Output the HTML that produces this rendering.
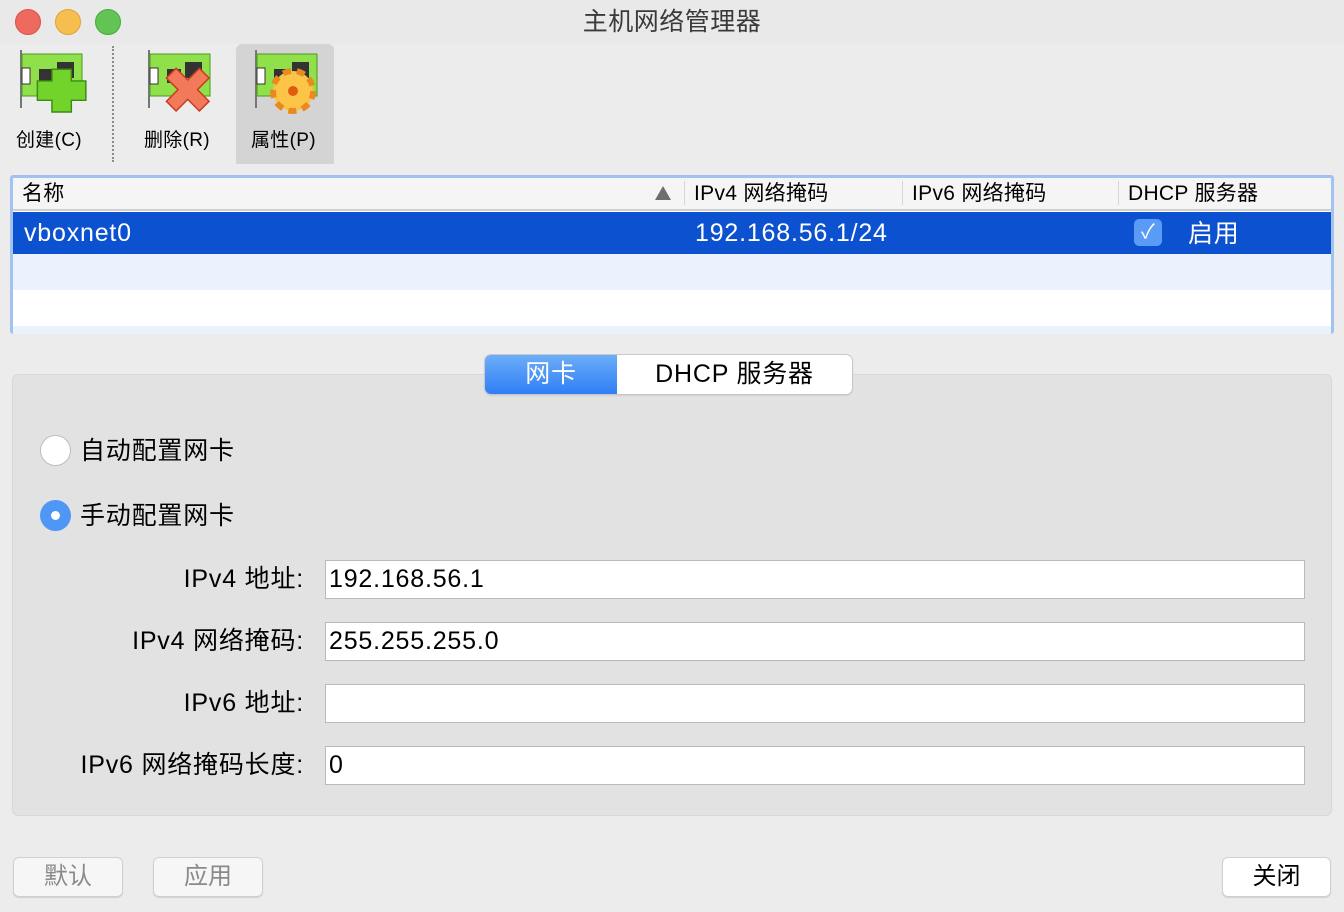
<!DOCTYPE html>
<html><head><meta charset="utf-8"><style>
*{box-sizing:border-box;margin:0;padding:0}
body{width:1344px;height:912px;background:#ececec;font-family:"Liberation Sans","Noto Sans CJK SC",sans-serif;color:#000;position:relative;overflow:hidden}
.a{position:absolute}
.title{left:0;top:0;width:1344px;height:44px;background:#e9e9e9;text-align:center;font-size:25px;line-height:44px;color:#3a3a3a;letter-spacing:.5px}
.dot{width:26px;height:26px;border-radius:50%;top:9px}
.tb{font-size:19px;top:125px;letter-spacing:.3px}
.hdr{font-size:21px;top:178px;line-height:32px;letter-spacing:.3px}
.big{font-size:25px;letter-spacing:.8px}
.lbl{text-align:right;width:310px;left:-6px;height:38px;line-height:40px}
.inp{left:325px;width:980px;height:39px;background:#fff;border:1px solid #b9b9b9;line-height:37px;padding-left:3px}
.btn{height:40px;top:857px;border-radius:6px;background:#f6f6f6;border:1px solid #d0d0d0;box-shadow:0 1px 1px rgba(0,0,0,.12);font-size:24px;text-align:center;line-height:38px;color:#8a8a8a}
</style></head><body>
<div class="a title">主机网络管理器</div>
<div class="a dot" style="left:15px;background:#ee6a5f;border:1px solid #d8544a"></div>
<div class="a dot" style="left:55px;background:#f5be4f;border:1px solid #dba43a"></div>
<div class="a dot" style="left:95px;background:#61c455;border:1px solid #4aa93f"></div>

<div class="a" style="left:236px;top:44px;width:98px;height:120px;background:#d4d4d4;border-radius:6px 6px 0 0"></div>
<div class="a" style="left:112px;top:46px;height:116px;border-left:2px dotted #8a8a8a"></div>

<svg class="a" style="left:17px;top:48px" width="70" height="68" viewBox="0 0 70 68">
<path d="M3 2 h2 v58 h-2z" fill="#777"/><rect x="5" y="6" width="60" height="42" fill="#8fe04a" stroke="#4a9a1a"/>
<rect x="5" y="20" width="8" height="16" fill="#fff" stroke="#333"/><rect x="22" y="21" width="14" height="14" fill="#333"/><rect x="40" y="14" width="17" height="16" fill="#333"/>
<path d="M36 24 h20 v12 h15 v20 h-15 v12 h-20 v-12 h-15 v-20 h15z" transform="translate(0,-2) scale(.97)" fill="#72d42a" stroke="#3f8a12" stroke-width="1.5"/>
</svg>
<svg class="a" style="left:145px;top:48px" width="70" height="68" viewBox="0 0 70 68">
<path d="M3 2 h2 v58 h-2z" fill="#777"/><rect x="5" y="6" width="60" height="42" fill="#8fe04a" stroke="#4a9a1a"/>
<rect x="5" y="20" width="8" height="16" fill="#fff" stroke="#333"/><rect x="22" y="21" width="14" height="14" fill="#333"/><rect x="40" y="14" width="17" height="16" fill="#333"/>
<path d="M20 32 l10 -10 l12 12 l12 -12 l10 10 l-12 12 l12 12 l-10 10 l-12 -12 l-12 12 l-10 -10 l12 -12z" transform="translate(2,-1) scale(.97)" fill="#f27a5a" stroke="#c83a1e" stroke-width="1.5"/>
</svg>
<svg class="a" style="left:252px;top:48px" width="70" height="68" viewBox="0 0 70 68">
<path d="M3 2 h2 v58 h-2z" fill="#777"/><rect x="5" y="6" width="60" height="42" fill="#8fe04a" stroke="#4a9a1a"/>
<rect x="5" y="20" width="8" height="16" fill="#fff" stroke="#333"/><rect x="22" y="21" width="14" height="14" fill="#333"/><rect x="40" y="14" width="17" height="16" fill="#333"/>
<g transform="translate(41,43)"><circle r="20" fill="#fdc040" stroke="#e88a20" stroke-width="6" stroke-dasharray="8 6"/><circle r="17" fill="#fdc548"/><circle r="5" fill="#e05a10"/></g>
</svg>
<div class="a tb" style="left:16px">创建(C)</div>
<div class="a tb" style="left:144px">删除(R)</div>
<div class="a tb" style="left:251px">属性(P)</div>

<div class="a" style="left:10px;top:175px;width:1324px;height:159px;border:3px solid #a2c3f0;border-radius:3px;background:#fff">
 <div class="a" style="left:0;top:0;width:1318px;height:33px;background:#f5f5f5;border-bottom:2px solid #d0d0d0"></div>
 <div class="a" style="left:0;top:34px;width:1318px;height:42px;background:#0b51d0"></div>
 <div class="a" style="left:0;top:76px;width:1318px;height:36px;background:#ecf2fd"></div>
 <div class="a" style="left:0;top:148px;width:1318px;height:8px;background:#ecf2fd"></div>
</div>
<div class="a" style="left:684px;top:181px;height:24px;border-left:1px solid #d6d6d6"></div>
<div class="a" style="left:902px;top:181px;height:24px;border-left:1px solid #d6d6d6"></div>
<div class="a" style="left:1118px;top:181px;height:24px;border-left:1px solid #d6d6d6"></div>
<div class="a hdr" style="left:22px">名称</div>
<div class="a" style="left:655px;top:186px;width:0;height:0;border-left:8px solid transparent;border-right:8px solid transparent;border-bottom:14px solid #6e6e6e"></div>
<div class="a hdr" style="left:694px">IPv4 网络掩码</div>
<div class="a hdr" style="left:912px">IPv6 网络掩码</div>
<div class="a hdr" style="left:1128px">DHCP 服务器</div>
<div class="a big" style="left:24px;top:212px;line-height:42px;color:#fff">vboxnet0</div>
<div class="a big" style="left:695px;top:212px;line-height:42px;color:#fff">192.168.56.1/24</div>
<div class="a" style="left:1134px;top:219px;width:28px;height:27px;background:#5a9cf5;border-radius:5px;color:#fff;text-align:center;font-size:20px;line-height:27px">✓</div>
<div class="a big" style="left:1188px;top:213px;line-height:42px;color:#fff">启用</div>

<div class="a" style="left:12px;top:374px;width:1320px;height:442px;background:#e2e2e2;border:1px solid #d8d8d8;border-radius:6px"></div>
<div class="a" style="left:485px;top:355px;width:367px;height:39px;border-radius:6px;background:#fff;box-shadow:0 0 0 1px #c8c8c8,0 1px 2px rgba(0,0,0,.2);overflow:hidden">
 <div class="a big" style="left:0;top:0;width:132px;height:39px;background:linear-gradient(#6caef8,#2f7ef5);color:#fff;text-align:center;line-height:39px">网卡</div>
 <div class="a big" style="left:132px;top:0;width:235px;height:39px;text-align:center;line-height:39px">DHCP 服务器</div>
</div>

<div class="a" style="left:40px;top:435px;width:31px;height:31px;border-radius:50%;background:#fff;border:1px solid #bdbdbd"></div>
<div class="a big" style="left:80px;top:432px;line-height:38px">自动配置网卡</div>
<div class="a" style="left:40px;top:500px;width:31px;height:31px;border-radius:50%;background:#4f97f6"><div class="a" style="left:11px;top:11px;width:9px;height:9px;border-radius:50%;background:#fff"></div></div>
<div class="a big" style="left:80px;top:497px;line-height:38px">手动配置网卡</div>

<div class="a big lbl" style="top:559px">IPv4 地址:</div>
<div class="a big inp" style="top:560px">192.168.56.1</div>
<div class="a big lbl" style="top:621px">IPv4 网络掩码:</div>
<div class="a big inp" style="top:622px">255.255.255.0</div>
<div class="a big lbl" style="top:683px">IPv6 地址:</div>
<div class="a big inp" style="top:684px"></div>
<div class="a big lbl" style="top:745px">IPv6 网络掩码长度:</div>
<div class="a big inp" style="top:746px">0</div>

<div class="a btn" style="left:13px;width:110px">默认</div>
<div class="a btn" style="left:153px;width:110px">应用</div>
<div class="a btn" style="left:1222px;width:109px;background:#fff;color:#000">关闭</div>
</body></html>
